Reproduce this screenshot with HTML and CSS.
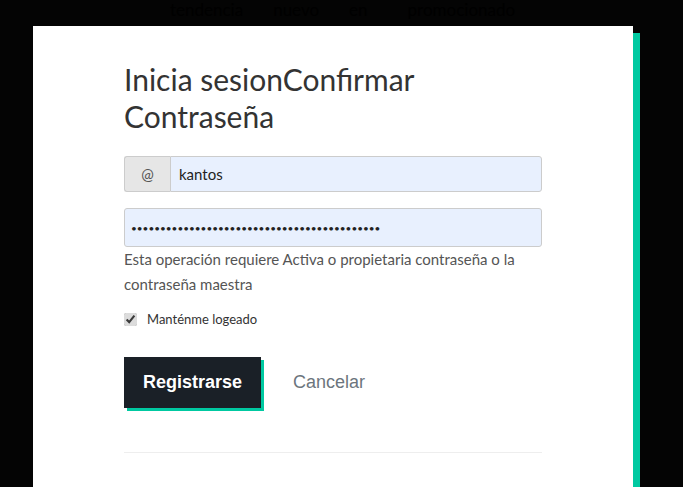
FILE: index.html
```html
<!DOCTYPE html>
<html lang="es">
<head>
    <meta charset="UTF-8">
    <meta name="viewport" content="width=device-width, initial-scale=1.0">
    <title>Inicia sesion</title>
    <link rel="stylesheet" href="styles.css">
</head>
<body>

<!-- faint page behind the modal -->
<div class="top-nav">
    <span class="nav-item">tendencia</span>
    <span class="nav-item">nuevo</span>
    <span class="nav-item">en</span>
    <span class="nav-item wide">promocionado</span>
</div>

<div class="modal">
    <h1 class="modal-title">Inicia sesionConfirmar Contraseña</h1>

    <div class="input-group">
        <span class="addon">@</span>
        <input type="text" class="field" value="kantos">
    </div>

    <input type="password" class="field password" value="xxxxxxxxxxxxxxxxxxxxxxxxxxxxxxxxxxxxxxxxxxx">
    <p class="help">Esta operación requiere Activa o propietaria contraseña o la contraseña maestra</p>

    <label class="remember">
        <input type="checkbox" checked>
        <span>Manténme logeado</span>
    </label>

    <div class="actions">
        <button class="btn-primary">Registrarse</button>
        <button class="btn-link">Cancelar</button>
    </div>

    <hr class="divider">
</div>

</body>
</html>
```

FILE: styles.css
```css
body {
    margin: 0;
    padding: 0;
    background-color: #040404;
    font-family: Lato, "Open Sans", sans-serif;
    overflow: hidden;
}

.top-nav {
    height: 26px;
    display: flex;
    padding-left: 170px;
    font-size: 17px;
    line-height: 20px;
    color: #000;
}

.nav-item {
    margin-right: 30px;
}

.nav-item.wide {
    margin-left: 10px;
}

.modal {
    width: 418px;
    min-height: 426px;
    margin-left: 33px;
    padding: 35px 91px 0;
    background-color: #fff;
    box-shadow: 7px 7px 0 #00c9a1;
}

.modal-title {
    margin: 0 0 21px;
    font-size: 30px;
    font-weight: 400;
    line-height: 37px;
    color: #333;
}

.input-group {
    display: flex;
    height: 36px;
    margin-bottom: 16px;
}

.addon {
    width: 45px;
    display: flex;
    align-items: center;
    justify-content: center;
    background-color: #e6e6e6;
    border: 1px solid #ccc;
    border-right: none;
    border-radius: 3px 0 0 3px;
    color: #555;
    font-size: 15px;
}

.field {
    flex: 1;
    box-sizing: border-box;
    height: 36px;
    padding: 0 8px;
    background-color: #e8f0fe;
    border: 1px solid #ccc;
    border-radius: 0 3px 3px 0;
    font-family: Lato, sans-serif;
    font-size: 15px;
    color: #222;
    outline: none;
}

.password {
    width: 100%;
    height: 39px;
    padding: 0 6px;
    border-radius: 3px;
    font-size: 10px;
}

.help {
    margin: 0;
    font-size: 15px;
    line-height: 25px;
    color: #555;
}

.remember {
    display: flex;
    align-items: center;
    gap: 10px;
    margin-top: 12px;
    height: 20px;
    font-size: 13px;
    color: #333;
}

.remember input {
    margin: 0;
    width: 13px;
    height: 13px;
    accent-color: #dcdcdc;
}

.actions {
    display: flex;
    align-items: center;
    gap: 32px;
    margin-top: 28px;
}

.btn-primary {
    height: 51px;
    padding: 0 19px;
    background-color: #1a2027;
    color: #fff;
    border: none;
    box-shadow: 3px 3px 0 #00c9a1;
    font-family: "Liberation Sans", Arial, sans-serif;
    font-size: 18px;
    font-weight: bold;
    cursor: pointer;
}

.btn-link {
    padding: 0;
    background: none;
    border: none;
    color: #6c757d;
    font-family: "Liberation Sans", Arial, sans-serif;
    font-size: 18px;
    cursor: pointer;
}

.divider {
    margin: 44px 0 0;
    border: none;
    border-top: 1px solid #eee;
}
```
